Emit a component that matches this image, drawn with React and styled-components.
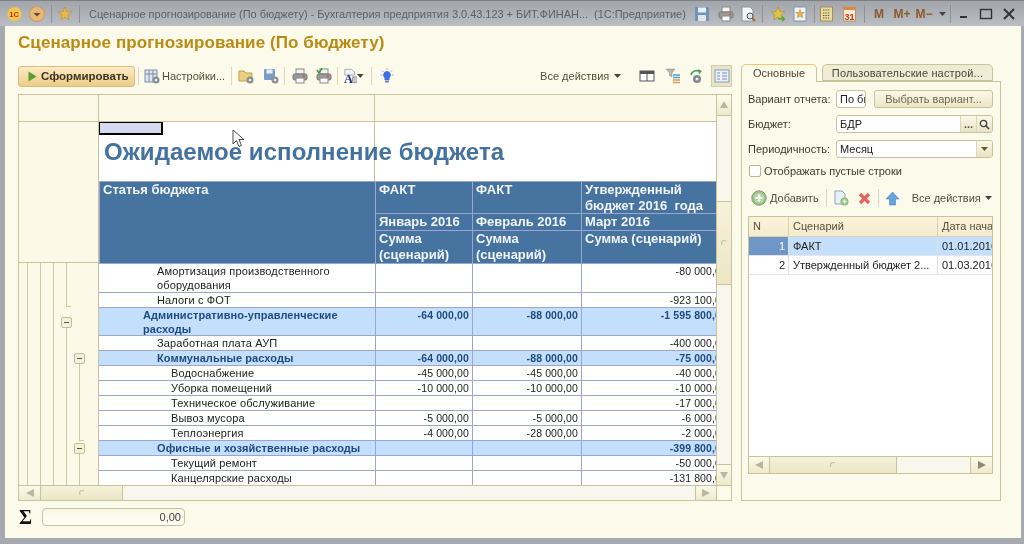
import React from "react";
import styled, { createGlobalStyle } from "styled-components";

const GlobalStyle = createGlobalStyle`
  html, body {
    margin: 0;
    padding: 0;
    background: #a4a8ac;
  }
  body {
    font-family: "Liberation Sans", Arial, sans-serif;
  }
`;

const LINE = "#c9c39c";
const GRID = "#9ba5d0";
const HEAD = "#46739f";
const GROUP = "#c4dffc";

const Window = styled.div`
  width: 1024px;
  height: 544px;
  overflow: hidden;
  position: relative;
  display: flex;
  flex-direction: column;
  background: #a6aaae;
  filter: blur(0.35px);
`;

const TitleBar = styled.div`
  height: 26px;
  flex: none;
  display: flex;
  align-items: center;
  padding-left: 7px;
  background: linear-gradient(#a2a6aa, #babec2);
  border-top: 1px solid #7d8084;
  box-sizing: border-box;
`;

const Slot = styled.span`
  flex: none;
  display: flex;
  align-items: center;
  justify-content: center;
  width: ${p => p.$w || 16}px;
  margin-left: ${p => p.$ml || 0}px;
`;

const BarSep = styled.span`
  flex: none;
  width: 1px;
  height: 18px;
  background: #8f9397;
  margin-left: ${p => p.$ml || 0}px;
`;

const WindowTitle = styled.span`
  flex: none;
  width: 594px;
  margin-left: 9px;
  font-size: 11px;
  color: #5c6165;
  white-space: pre;
  letter-spacing: -0.03px;
`;

const MemoKey = styled.span`
  flex: none;
  width: ${p => p.$w}px;
  margin-left: ${p => p.$ml}px;
  font-size: 12px;
  font-weight: bold;
  color: #8a5a2a;
  text-align: center;
`;

const Body = styled.div`
  flex: 1;
  margin: 0 3px 6px 5px;
  background: #fcfaea;
  padding: 8px 20px 0 13px;
  display: flex;
  flex-direction: column;
  min-height: 0;
`;

const Heading = styled.h1`
  margin: 0;
  height: 20px;
  line-height: 18px;
  font-size: 17px;
  font-weight: bold;
  letter-spacing: 0.08px;
  color: #bb8a12;
`;

const Columns = styled.div`
  display: flex;
  gap: 9px;
  margin-top: 10px;
`;

const LeftPane = styled.div`
  width: 714px;
  flex: none;
`;

const Toolbar = styled.div`
  height: 22px;
  display: flex;
  align-items: center;
  margin-top: 1px;
`;

const RunButton = styled.button`
  width: 117px;
  height: 21px;
  flex: none;
  padding: 0 0 0 9px;
  display: flex;
  align-items: center;
  gap: 4px;
  border: 1px solid #dcbd7c;
  border-radius: 3px;
  background: linear-gradient(#fcebc6, #eccb88);
  font: bold 11.5px "Liberation Sans", Arial, sans-serif;
  color: #3d3420;
`;

const ToolSep = styled.span`
  flex: none;
  width: 1px;
  height: 18px;
  background: #ddd8bc;
  margin-left: ${p => p.$ml || 0}px;
`;

const ToolText = styled.span`
  flex: none;
  margin-left: ${p => p.$ml || 0}px;
  font-size: 11px;
  color: #55503c;
  white-space: nowrap;
`;

const ActiveTool = styled.span`
  flex: none;
  width: 21px;
  height: 22px;
  margin-left: ${p => p.$ml || 0}px;
  box-sizing: border-box;
  display: flex;
  align-items: center;
  justify-content: center;
  background: #e9e4c6;
  border: 1px solid #d2cca6;
`;

const Sheet = styled.div`
  margin-top: 7px;
  width: 714px;
  height: 407px;
  box-sizing: border-box;
  border: 1px solid ${LINE};
  display: grid;
  grid-template-columns: 80px 617px 15px;
  grid-template-rows: 390px 15px;
  background: #fff;
`;

const Gutter = styled.div`
  display: flex;
  flex-direction: column;
  background: #fcf9e8;
  border-right: 1px solid ${LINE};
  overflow: hidden;
`;

const GutterHead = styled.div`
  height: 26px;
  flex: none;
  border-bottom: 1px solid ${LINE};
`;

const GutterPad = styled.div`
  height: 140px;
  flex: none;
  border-bottom: 1px solid ${LINE};
`;

const Report = styled.div`
  overflow: hidden;
  min-width: 0;
`;

const Ruler = styled.div`
  height: 26px;
  border-bottom: 1px solid ${LINE};
  background: #fcf9e8 linear-gradient(${LINE}, ${LINE}) 275px 0 / 1px 100% no-repeat;
`;

const TitleArea = styled.div`
  height: 59px;
  box-sizing: border-box;
  background: linear-gradient(${LINE}, ${LINE}) 275px 0 / 1px 100% no-repeat;
`;

const ActiveCell = styled.div`
  width: 64px;
  height: 13px;
  box-sizing: border-box;
  background: #d6daf0;
  border: 1px solid #000;
  border-right-width: 2px;
  border-bottom-width: 2px;
`;

const ReportTitle = styled.div`
  margin: 3px 0 0 5px;
  font-size: 24px;
  line-height: 28px;
  font-weight: bold;
  color: #4472a0;
  white-space: nowrap;
  letter-spacing: 0.07px;
`;

const Grid = styled.div`
  display: grid;
  grid-template-columns: 276px 97px 109px 149px;
  width: 631px;
`;

const HeadCell = styled.div`
  box-sizing: border-box;
  background: ${HEAD};
  color: #f1f5f9;
  font-size: 13px;
  line-height: 16px;
  font-weight: bold;
  padding-left: 3px;
  border-top: 1px solid ${GRID};
  border-left: 1px solid ${GRID};
  height: ${p => p.$h}px;
  grid-row: ${p => p.$span ? `span ${p.$span}` : "auto"};
`;

const Row = styled.div`
  display: contents;
`;

const NameCell = styled.div`
  box-sizing: border-box;
  height: ${p => p.$h}px;
  padding-left: ${p => p.$indent}px;
  font-size: 11px;
  line-height: 14px;
  letter-spacing: ${p => p.$group ? 0.08 : 0.14}px;
  font-weight: ${p => p.$group ? "bold" : "normal"};
  color: ${p => p.$group ? "#1e4a82" : "#222"};
  background: ${p => p.$group ? GROUP : "#fff"};
  border-top: 1px solid ${GRID};
`;

const NumCell = styled.div`
  box-sizing: border-box;
  height: ${p => p.$h}px;
  padding-right: 3px;
  text-align: right;
  font-size: 10.5px;
  line-height: 14px;
  letter-spacing: 0.12px;
  font-weight: ${p => p.$group ? "bold" : "normal"};
  color: ${p => p.$group ? "#1e4a82" : "#222"};
  background: ${p => p.$group ? GROUP : "#fff"};
  border-top: 1px solid ${GRID};
  border-left: 1px solid ${GRID};
`;

const VScroll = styled.div`
  display: flex;
  flex-direction: column;
  background: #f8f7ee;
  border-left: 1px solid ${LINE};
`;

const HScroll = styled.div`
  display: flex;
  background: #f8f7ee;
  border-top: 1px solid ${LINE};
  grid-column: ${p => p.$col || "auto"};
`;

const ScrollBtn = styled.div`
  flex: none;
  display: flex;
  align-items: center;
  justify-content: center;
  box-sizing: border-box;
  width: ${p => p.$w ? `${p.$w}px` : "auto"};
  height: ${p => p.$h ? `${p.$h}px` : "auto"};
  background: linear-gradient(#fcfaea, #efe9cc);
  border-right: ${p => p.$edge === "right" ? `1px solid ${LINE}` : "none"};
  border-left: ${p => p.$edge === "left" ? `1px solid ${LINE}` : "none"};
  border-bottom: ${p => p.$edge === "bottom" ? `1px solid ${LINE}` : "none"};
  border-top: ${p => p.$edge === "top" ? `1px solid ${LINE}` : "none"};
`;

const Thumb = styled.div`
  flex: none;
  display: flex;
  align-items: center;
  justify-content: center;
  box-sizing: border-box;
  width: ${p => p.$w ? `${p.$w}px` : "auto"};
  height: ${p => p.$h ? `${p.$h}px` : "auto"};
  background: linear-gradient(#f6f2da, #ece6c6);
  border: 0 solid ${LINE};
  border-width: ${p => p.$vertical ? "1px 0" : "0 1px 0 0"};
`;

const Grip = styled.span`
  width: 4px;
  height: 4px;
  border-radius: 50%;
  border: 1px solid #c4c0a8;
  border-right-color: transparent;
  border-bottom-color: transparent;
`;

const Track = styled.div`
  flex: ${p => p.$h ? "none" : 1};
  height: ${p => p.$h ? `${p.$h}px` : "auto"};
`;

const Corner = styled.div`
  background: #fcfaea;
  border-top: 1px solid ${LINE};
  border-left: 1px solid ${LINE};
`;

const Footer = styled.div`
  display: flex;
  align-items: center;
  margin-top: 7px;
  height: 18px;
`;

const Sigma = styled.span`
  width: 24px;
  padding-left: 1px;
  box-sizing: border-box;
  font: bold 20px "Liberation Serif", serif;
  color: #111;
`;

const SumField = styled.div`
  width: 143px;
  height: 18px;
  box-sizing: border-box;
  border: 1px solid ${LINE};
  border-radius: 4px;
  background: linear-gradient(#f8f6e4, #fffef6);
  text-align: right;
  padding-right: 3px;
  font-size: 11px;
  line-height: 16px;
  color: #444;
`;

const RightPane = styled.div`
  width: 260px;
  flex: none;
`;

const Tabs = styled.div`
  display: flex;
  align-items: flex-end;
  height: 17px;
  gap: 5px;
`;

const Tab = styled.div`
  box-sizing: border-box;
  flex: none;
  width: ${p => p.$w}px;
  height: ${p => p.$active ? 18 : 17}px;
  margin-bottom: ${p => p.$active ? -1 : 0}px;
  position: relative;
  z-index: ${p => p.$active ? 1 : 0};
  text-align: center;
  font-size: 11px;
  line-height: 16px;
  letter-spacing: ${p => p.$active ? 0 : 0.15}px;
  color: #4a4636;
  border: 1px solid ${LINE};
  border-bottom: ${p => p.$active ? "none" : `1px solid ${LINE}`};
  border-top-color: ${p => p.$active ? "#f0c870" : LINE};
  border-radius: 5px 5px 0 0;
  background: ${p => p.$active ? "#fcfaea" : "#f0ecd4"};
`;

const Panel = styled.div`
  box-sizing: border-box;
  height: 420px;
  border: 1px solid ${LINE};
  padding: 8px 7px 0 6px;
  display: flex;
  flex-direction: column;
`;

const FieldRow = styled.div`
  display: flex;
  align-items: center;
  height: 18px;
  margin-bottom: 7px;
`;

const FieldLabel = styled.label`
  flex: none;
  width: 88px;
  font-size: 11px;
  color: #3f3b2c;
`;

const Input = styled.div`
  box-sizing: border-box;
  height: 18px;
  flex: ${p => p.$w ? "none" : 1};
  width: ${p => p.$w ? `${p.$w}px` : "auto"};
  display: flex;
  overflow: hidden;
  border: 1px solid ${LINE};
  border-radius: 3px;
  background: #fff;
`;

const InputText = styled.span`
  flex: 1;
  overflow: hidden;
  padding-left: 3px;
  font-size: 11px;
  line-height: 16px;
  color: #222;
  white-space: nowrap;
`;

const InputBtn = styled.span`
  flex: none;
  width: 15px;
  display: flex;
  align-items: center;
  justify-content: center;
  background: linear-gradient(#fbf8e8, #e9e3c4);
  border-left: 1px solid #ddd7b6;
  font-size: 11px;
  font-weight: bold;
  color: #555;
`;

const PlainButton = styled.button`
  flex: none;
  width: 119px;
  height: 18px;
  margin-left: 8px;
  padding: 0;
  border: 1px solid ${LINE};
  border-radius: 3px;
  background: linear-gradient(#fbf8e8, #ece6c8);
  font: 11px "Liberation Sans", Arial, sans-serif;
  color: #6d6850;
`;

const CheckRow = styled.div`
  display: flex;
  align-items: center;
  height: 16px;
  margin-top: -2px;
  font-size: 11px;
  color: #3f3b2c;
  gap: 3px;
`;

const CheckBox = styled.span`
  box-sizing: border-box;
  width: 12px;
  height: 12px;
  margin-left: 1px;
  border: 1px solid #b9b38e;
  border-radius: 2px;
  background: #fff;
`;

const SubToolbar = styled.div`
  display: flex;
  align-items: center;
  height: 22px;
  margin-top: 8px;
`;

const ListTable = styled.div`
  margin-top: 7px;
  height: 258px;
  box-sizing: border-box;
  border: 1px solid ${LINE};
  display: flex;
  flex-direction: column;
  background: #fff;
`;

const ListRow = styled.div`
  flex: none;
  display: grid;
  grid-template-columns: 40px 149px 56px;
  height: ${p => p.$h}px;
  overflow: hidden;
`;

const ListHead = styled.div`
  box-sizing: border-box;
  padding-left: 4px;
  font-size: 11px;
  line-height: 19px;
  color: #55503c;
  background: linear-gradient(#fbf3d8, #f3ecd0);
  border-right: 1px solid #d8d2b0;
  border-bottom: 1px solid #d8d2b0;
  white-space: nowrap;
  overflow: hidden;
`;

const ListCell = styled.div`
  box-sizing: border-box;
  padding: 0 3px 0 4px;
  font-size: 11px;
  line-height: 18px;
  color: ${p => p.$marked ? "#fff" : "#222"};
  text-align: ${p => p.$right ? "right" : "left"};
  background: ${p => p.$marked ? "#6e97c8" : p.$selected ? GROUP : "#fff"};
  border-right: 1px solid #e0e0e0;
  border-bottom: 1px solid #e4e4ea;
  white-space: nowrap;
  overflow: hidden;
`;

const ListFill = styled.div`
  flex: 1;
`;

const ListScroll = styled.div`
  flex: none;
  height: 16px;
  display: flex;
  background: #f8f7ee;
  border-top: 1px solid ${LINE};
`;

const Cursor = styled.svg`
  position: absolute;
  left: 232px;
  top: 129px;
`;

const Ico = ({ w = 16, h = 16, children }) => (
  <svg width={w} height={h} viewBox={`0 0 ${w} ${h}`}>{children}</svg>
);

const Arrow = ({ dir, color = "#b9b6a0" }) => {
  const pts = {
    up: "5,1 9,8 1,8",
    down: "1,2 9,2 5,9",
    left: "9,1 9,9 1,5",
    right: "1,1 9,5 1,9",
  };
  return <Ico w={10} h={10}><polygon points={pts[dir]} fill={color} /></Ico>;
};

const Floppy = () => (
  <Ico>
    <rect x="1" y="1" width="14" height="14" rx="1" fill="#6d93bd" />
    <rect x="4" y="1.5" width="8" height="5" fill="#e8eef5" />
    <rect x="4" y="9" width="8" height="6" fill="#dfe5ea" />
  </Ico>
);

const Printer = ({ check }) => (
  <Ico>
    <rect x="4" y="1" width="8" height="5" fill="#f4f4f4" stroke="#888" />
    <rect x="1" y="6" width="14" height="6" rx="1.5" fill="#9a9a9a" stroke="#777" />
    <rect x="4" y="10" width="8" height="5" fill="#fafafa" stroke="#888" />
    <rect x="11" y="7.5" width="2" height="1.5" fill="#d9533b" />
    {check && <path d="M1 2l2 3 3-5" stroke="#3d9a3d" strokeWidth="1.5" fill="none" />}
  </Ico>
);

const Preview = () => (
  <Ico>
    <path d="M2 1h8l3 3v11H2z" fill="#f5f8fb" stroke="#7d97b5" />
    <circle cx="10" cy="10" r="3" fill="#d9e5f0" stroke="#555" />
    <path d="M12 12l3 3" stroke="#a86a20" strokeWidth="2" />
  </Ico>
);

const Star = ({ x = 8, y = 8, r = 7, fill = "#e8b84a", stroke = "#b98a26" }) => {
  const pts = [];
  for (let i = 0; i < 10; i++) {
    const rad = i % 2 === 0 ? r : r * 0.45;
    const a = -Math.PI / 2 + (i * Math.PI) / 5;
    pts.push(`${(x + rad * Math.cos(a)).toFixed(1)},${(y + rad * Math.sin(a)).toFixed(1)}`);
  }
  return <polygon points={pts.join(" ")} fill={fill} stroke={stroke} strokeWidth="0.6" />;
};

const TableSettings = () => (
  <Ico>
    <rect x="1" y="2" width="12" height="12" fill="#dfe6ef" stroke="#7d8fa8" />
    <path d="M5 2v12M9 2v12M1 6h12" stroke="#7d8fa8" />
    <circle cx="12" cy="12" r="3.5" fill="#8a8f94" />
    <circle cx="12" cy="12" r="1.3" fill="#eee" />
  </Ico>
);

const FolderGear = () => (
  <Ico>
    <path d="M1 3h5l2 2h6v8H1z" fill="#eccf7e" stroke="#c2a050" />
    <circle cx="12" cy="12" r="3.5" fill="#8a8f94" />
    <circle cx="12" cy="12" r="1.3" fill="#eee" />
  </Ico>
);

const SaveGear = () => (
  <Ico>
    <rect x="1" y="1" width="11" height="11" rx="1" fill="#7b9dc4" />
    <rect x="3.5" y="1.5" width="6" height="4" fill="#e8eef5" />
    <circle cx="12" cy="12" r="3.5" fill="#8a8f94" />
    <circle cx="12" cy="12" r="1.3" fill="#eee" />
  </Ico>
);

const FontTable = () => (
  <Ico w={14} h={16}>
    <path d="M1 1h7l3 3v3H1z" fill="#f4f6fa" stroke="#9aa7b8" />
    <text x="0" y="15" fontFamily="Liberation Serif, serif" fontWeight="bold" fontSize="13" fill="#1a2f9a">A</text>
    <rect x="9" y="9" width="5" height="6" fill="#c8c8c8" stroke="#999" />
  </Ico>
);

const Bulb = () => (
  <Ico>
    <path d="M8 3a4 4 0 0 1 2.5 7v2h-5v-2A4 4 0 0 1 8 3z" fill="#3f6fe0" />
    <rect x="6" y="12.5" width="4" height="2" fill="#6b86c8" />
    <path d="M8 0v2M1.5 7h2M12.5 7h2M3 2.5l1.5 1.5M13 2.5L11.5 4" stroke="#8cb4e8" />
  </Ico>
);

const Caret = ({ color = "#444" }) => (
  <Ico w={7} h={4}><polygon points="0,0 7,0 3.5,4" fill={color} /></Ico>
);

const Plus = () => (
  <Ico>
    <circle cx="8" cy="8" r="7.2" fill="#9cc48a" stroke="#7c9a72" />
    <circle cx="8" cy="8" r="5" fill="#b9d9a4" />
    <path d="M8 4.5v7M4.5 8h7" stroke="#fff" strokeWidth="2.2" />
  </Ico>
);

const CopyDoc = () => (
  <Ico>
    <path d="M2 1h7l3 3v10H2z" fill="#e8f0f8" stroke="#8fa6bf" />
    <circle cx="11.5" cy="11.5" r="4" fill="#8fc07a" />
    <path d="M11.5 9.5v4M9.5 11.5h4" stroke="#fff" strokeWidth="1.4" />
  </Ico>
);

const Cross = () => (
  <Ico w={13} h={13}>
    <path d="M2 2l9 9M11 2l-9 9" stroke="#e8625a" strokeWidth="3.2" />
  </Ico>
);

const UpHome = () => (
  <Ico w={15} h={15}>
    <path d="M7.5 1L14 8h-3.5v6h-6V8H1z" fill="#62a5dc" stroke="#4b87bc" strokeWidth="0.6" />
  </Ico>
);

const TreeLines = () => (
  <svg width="79" height="222" viewBox="19 263 79 222">
    <g stroke="#cdc7a2" fill="none" shapeRendering="crispEdges">
      <path d="M27.5 263v222M40.5 263v222M53.5 263v222" />
      <path d="M66.5 263v43.5h4M66.5 327v158" />
      <path d="M79.5 364v76.5h4M79.5 453v32" />
    </g>
    {[[61, 317], [74, 353], [74, 443]].map(([x, y]) => (
      <g key={y}>
        <rect x={x + 0.5} y={y + 0.5} width="10" height="10" rx="1.5" fill="#f5f1d8" stroke="#c4be98" />
        <path d={`M${x + 3} ${y + 5.5}h5`} stroke="#555" />
      </g>
    ))}
  </svg>
);

const rows = [
  { name: "Амортизация производственного оборудования", indent: 58, h: 29, v: ["", "", "-80 000,00"] },
  { name: "Налоги с ФОТ", indent: 58, h: 15, v: ["", "", "-923 100,00"] },
  { name: "Административно-управленческие расходы", indent: 44, h: 28, group: true, v: ["-64 000,00", "-88 000,00", "-1 595 800,00"] },
  { name: "Заработная плата АУП", indent: 58, h: 15, v: ["", "", "-400 000,00"] },
  { name: "Коммунальные расходы", indent: 58, h: 15, group: true, v: ["-64 000,00", "-88 000,00", "-75 000,00"] },
  { name: "Водоснабжение", indent: 72, h: 15, v: ["-45 000,00", "-45 000,00", "-40 000,00"] },
  { name: "Уборка помещений", indent: 72, h: 15, v: ["-10 000,00", "-10 000,00", "-10 000,00"] },
  { name: "Техническое обслуживание", indent: 72, h: 15, v: ["", "", "-17 000,00"] },
  { name: "Вывоз мусора", indent: 72, h: 15, v: ["-5 000,00", "-5 000,00", "-6 000,00"] },
  { name: "Теплоэнергия", indent: 72, h: 15, v: ["-4 000,00", "-28 000,00", "-2 000,00"] },
  { name: "Офисные и хозяйственные расходы", indent: 58, h: 15, group: true, v: ["", "", "-399 800,00"] },
  { name: "Текущий ремонт", indent: 72, h: 15, v: ["", "", "-50 000,00"] },
  { name: "Канцелярские расходы", indent: 72, h: 15, v: ["", "", "-131 800,00"] },
];

const App = () => (
  <Window>
    <GlobalStyle />
    <TitleBar>
      <Slot $w={15}>
        <Ico>
          <circle cx="8" cy="8" r="7.5" fill="#f2c84a" />
          <text x="2.5" y="11" fontSize="8" fontWeight="bold" fontFamily="Liberation Sans" fill="#c8281e">1С</text>
        </Ico>
      </Slot>
      <Slot $ml={7}>
        <Ico>
          <circle cx="8" cy="8" r="7.5" fill="#e6b878" stroke="#c99a58" />
          <polygon points="4.5,7 11.5,7 8,10.5" fill="#6b4a28" />
        </Ico>
      </Slot>
      <BarSep $ml={6} />
      <Slot $ml={5}><Ico><Star /></Ico></Slot>
      <BarSep $ml={6} />
      <WindowTitle>Сценарное прогнозирование (По бюджету) - Бухгалтерия предприятия 3.0.43.123 + БИТ.ФИНАН...  (1С:Предприятие)</WindowTitle>
      <Slot $ml={11}><Floppy /></Slot>
      <Slot $ml={8}><Printer /></Slot>
      <Slot $ml={6}><Preview /></Slot>
      <BarSep $ml={6} />
      <Slot $ml={7}>
        <Ico>
          <Star fill="#e2c24a" stroke="#a98a24" />
          <path d="M8 12h4v-2.5l3.5 3.5-3.5 3v-2.5H8z" fill="#58a83c" />
        </Ico>
      </Slot>
      <Slot $ml={7} $w={14}>
        <Ico w={14} h={16}>
          <rect x="1" y="1" width="12" height="14" fill="#f0f4f8" stroke="#7d97b5" />
          <Star x={7} y={8} r={4.5} />
        </Ico>
      </Slot>
      <BarSep $ml={7} />
      <Slot $ml={5} $w={13}>
        <Ico w={13} h={16}>
          <rect x="0.5" y="1" width="12" height="14" fill="#ecd9a0" stroke="#a58f58" />
          <path d="M3 4h7M3 7h7M3 9.5h7M3 12h7" stroke="#4f6b3a" strokeDasharray="1.4 1" />
        </Ico>
      </Slot>
      <Slot $ml={10} $w={13}>
        <Ico w={13} h={16}>
          <rect x="0.5" y="1" width="12" height="14" fill="#f6ead0" stroke="#b89868" />
          <rect x="0.5" y="1" width="12" height="3" fill="#d98a4a" />
          <text x="1.5" y="13.5" fontSize="9" fontWeight="bold" fontFamily="Liberation Sans" fill="#c8321e">31</text>
        </Ico>
      </Slot>
      <BarSep $ml={8} />
      <MemoKey $w={14} $ml={7}>M</MemoKey>
      <MemoKey $w={18} $ml={7}>M+</MemoKey>
      <MemoKey $w={18} $ml={4}>M−</MemoKey>
      <Slot $ml={5} $w={8}><Caret /></Slot>
      <BarSep $ml={4} />
      <Slot $ml={8} $w={10}>
        <Ico w={10} h={10}><rect x="1" y="7" width="7" height="2" fill="#333" /></Ico>
      </Slot>
      <Slot $ml={10} $w={14}>
        <Ico w={14} h={12}><rect x="1.5" y="1.5" width="11" height="9" fill="none" stroke="#333" strokeWidth="1.4" /></Ico>
      </Slot>
      <Slot $ml={9} $w={14}>
        <Ico w={14} h={12}><path d="M2 1l10 10M12 1L2 11" stroke="#333" strokeWidth="2" /></Ico>
      </Slot>
    </TitleBar>

    <Body>
      <Heading>Сценарное прогнозирование (По бюджету)</Heading>
      <Columns>
        <LeftPane>
          <Toolbar>
            <RunButton>
              <Ico w={9} h={11}><polygon points="0.5,0.5 8.5,5.5 0.5,10.5" fill="#58a02c" /></Ico>
              Сформировать
            </RunButton>
            <ToolSep $ml={3} />
            <Slot $ml={5}><TableSettings /></Slot>
            <ToolText $ml={2}>Настройки...</ToolText>
            <ToolSep $ml={6} />
            <Slot $ml={6}><FolderGear /></Slot>
            <Slot $ml={9}><SaveGear /></Slot>
            <ToolSep $ml={5} />
            <Slot $ml={7}><Printer /></Slot>
            <Slot $ml={8}><Printer check /></Slot>
            <ToolSep $ml={5} />
            <Slot $ml={6} $w={20}>
              <FontTable />
              <Caret />
            </Slot>
            <ToolSep $ml={7} />
            <Slot $ml={7}><Bulb /></Slot>
            <ToolText $ml={145}>Все действия</ToolText>
            <Slot $ml={4} $w={8}><Caret /></Slot>
            <Slot $ml={18}>
              <Ico>
                <rect x="1" y="3" width="14" height="10" fill="#fff" stroke="#555" />
                <rect x="1" y="3" width="14" height="3" fill="#555" />
                <path d="M8 3v10" stroke="#555" />
              </Ico>
            </Slot>
            <Slot $ml={10}>
              <Ico>
                <path d="M1 1h9L7 5v4L4.5 7.5V5z" fill="#b8b8b0" stroke="#888" strokeWidth="0.5" />
                <path d="M8 7h7M8 9.5h7" stroke="#4f9bd0" strokeWidth="1.5" />
                <path d="M8 12h7M8 14.5h7" stroke="#dc9a5a" strokeWidth="1.5" />
              </Ico>
            </Slot>
            <Slot $ml={7}>
              <Ico>
                <path d="M3 7a5.5 5.5 0 0 1 9-3" fill="none" stroke="#4fa060" strokeWidth="1.6" />
                <polygon points="10,1 14,3 11,6.5" fill="#4fa060" />
                <circle cx="9" cy="11" r="4" fill="#7f8a8c" />
                <circle cx="9" cy="11" r="1.5" fill="#eee" />
              </Ico>
            </Slot>
            <ActiveTool $ml={7}>
              <Ico>
                <rect x="1" y="2" width="14" height="12" fill="#eef3fb" stroke="#7f9cc2" />
                <path d="M3 5h3M3 8h3M3 11h3M8 5h5M8 8h5M8 11h5" stroke="#6f8bb0" />
              </Ico>
            </ActiveTool>
          </Toolbar>

          <Sheet>
            <Gutter>
              <GutterHead />
              <GutterPad />
              <TreeLines />
            </Gutter>
            <Report>
              <Ruler />
              <TitleArea>
                <ActiveCell />
                <ReportTitle>Ожидаемое исполнение бюджета</ReportTitle>
              </TitleArea>
              <Grid>
                <HeadCell $span={3} $h={82}>Статья бюджета</HeadCell>
                <HeadCell $h={32}>ФАКТ</HeadCell>
                <HeadCell $h={32}>ФАКТ</HeadCell>
                <HeadCell $h={32}>Утвержденный<br />бюджет 2016 &nbsp;года</HeadCell>
                <HeadCell $h={17}>Январь 2016</HeadCell>
                <HeadCell $h={17}>Февраль 2016</HeadCell>
                <HeadCell $h={17}>Март 2016</HeadCell>
                <HeadCell $h={33}>Сумма (сценарий)</HeadCell>
                <HeadCell $h={33}>Сумма (сценарий)</HeadCell>
                <HeadCell $h={33}>Сумма (сценарий)</HeadCell>
                {rows.map(r => (
                  <Row key={r.name}>
                    <NameCell $h={r.h} $indent={r.indent} $group={r.group}>{r.name}</NameCell>
                    {r.v.map((n, i) => (
                      <NumCell key={i} $h={r.h} $group={r.group}>{n}</NumCell>
                    ))}
                  </Row>
                ))}
              </Grid>
            </Report>
            <VScroll>
              <ScrollBtn $h={21} $edge="bottom"><Arrow dir="up" /></ScrollBtn>
              <Track $h={85} />
              <Thumb $vertical $h={84}><Grip /></Thumb>
              <Track />
              <ScrollBtn $h={21} $edge="top"><Arrow dir="down" /></ScrollBtn>
            </VScroll>
            <HScroll $col="1 / span 2">
              <ScrollBtn $w={22} $edge="right"><Arrow dir="left" /></ScrollBtn>
              <Thumb $w={82}><Grip /></Thumb>
              <Track />
              <ScrollBtn $w={21} $edge="left"><Arrow dir="right" /></ScrollBtn>
            </HScroll>
            <Corner />
          </Sheet>

          <Footer>
            <Sigma>Σ</Sigma>
            <SumField>0,00</SumField>
          </Footer>
        </LeftPane>

        <RightPane>
          <Tabs>
            <Tab $active $w={76}>Основные</Tab>
            <Tab $w={171}>Пользовательские настрой...</Tab>
          </Tabs>
          <Panel>
            <FieldRow>
              <FieldLabel>Вариант отчета:</FieldLabel>
              <Input $w={30}><InputText>По бюджету</InputText></Input>
              <PlainButton>Выбрать вариант...</PlainButton>
            </FieldRow>
            <FieldRow>
              <FieldLabel>Бюджет:</FieldLabel>
              <Input>
                <InputText>БДР</InputText>
                <InputBtn>...</InputBtn>
                <InputBtn>
                  <Ico w={11} h={11}>
                    <circle cx="4.5" cy="4.5" r="3.2" fill="none" stroke="#444" strokeWidth="1.3" />
                    <path d="M7 7l3 3" stroke="#444" strokeWidth="1.6" />
                  </Ico>
                </InputBtn>
              </Input>
            </FieldRow>
            <FieldRow>
              <FieldLabel>Периодичность:</FieldLabel>
              <Input>
                <InputText>Месяц</InputText>
                <InputBtn><Caret color="#6b5a20" /></InputBtn>
              </Input>
            </FieldRow>
            <CheckRow>
              <CheckBox />
              Отображать пустые строки
            </CheckRow>
            <SubToolbar>
              <Slot $ml={3}><Plus /></Slot>
              <ToolText $ml={3}>Добавить</ToolText>
              <ToolSep $ml={7} />
              <Slot $ml={6}><CopyDoc /></Slot>
              <Slot $ml={9} $w={13}><Cross /></Slot>
              <ToolSep $ml={7} />
              <Slot $ml={6} $w={15}><UpHome /></Slot>
              <ToolText $ml={12}>Все действия</ToolText>
              <Slot $ml={4} $w={8}><Caret /></Slot>
            </SubToolbar>
            <ListTable>
              <ListRow $h={20}>
                <ListHead>N</ListHead>
                <ListHead>Сценарий</ListHead>
                <ListHead>Дата начала</ListHead>
              </ListRow>
              <ListRow $h={19}>
                <ListCell $marked $right>1</ListCell>
                <ListCell $selected>ФАКТ</ListCell>
                <ListCell $selected>01.01.2016</ListCell>
              </ListRow>
              <ListRow $h={19}>
                <ListCell $right>2</ListCell>
                <ListCell>Утвержденный бюджет 2...</ListCell>
                <ListCell>01.03.2016</ListCell>
              </ListRow>
              <ListFill />
              <ListScroll>
                <ScrollBtn $w={21} $edge="right"><Arrow dir="left" /></ScrollBtn>
                <Thumb $w={127}><Grip /></Thumb>
                <Track />
                <ScrollBtn $w={22} $edge="left"><Arrow dir="right" color="#8a8878" /></ScrollBtn>
              </ListScroll>
            </ListTable>
          </Panel>
        </RightPane>
      </Columns>
    </Body>

    <Cursor width="13" height="20" viewBox="0 0 13 20">
      <path d="M1 1v14l3.5-3.5 2.5 6 2.5-1-2.5-6H12z" fill="#fff" stroke="#333" strokeWidth="0.9" />
    </Cursor>
  </Window>
);

export default App;
